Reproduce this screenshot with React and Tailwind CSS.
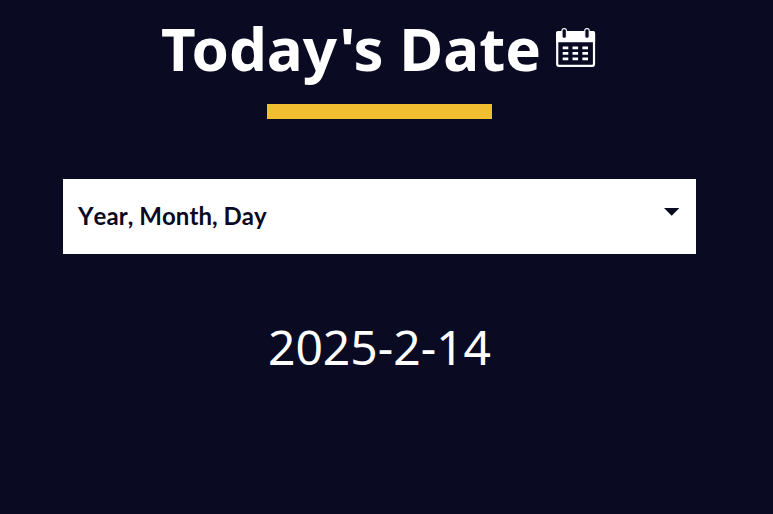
function CalendarIcon() {
  return (
    <svg viewBox="0 0 40 40" className="h-10 w-10 shrink-0" aria-hidden="true">
      <rect x="1.2" y="4.2" width="36.8" height="33.6" rx="1.8" fill="#0a0a23" stroke="#fff" strokeWidth="2.2" />
      <path d="M0 14.2V5.2Q0 3.1 2.1 3.1H37Q39.1 3.1 39.1 5.2V14.2Z" fill="#fff" />
      <rect x="6" y=".6" width="4.4" height="9.8" rx="2" fill="#0a0a23" stroke="#fff" strokeWidth="1.1" />
      <rect x="28.8" y=".6" width="4.4" height="9.8" rx="2" fill="#0a0a23" stroke="#fff" strokeWidth="1.1" />
      <path
        d="M6.7 18.4h5.6v2.8H6.7zM16.5 18.4h5.6v2.8h-5.6zM26.4 18.4H32v2.8h-5.6zM6.7 23.9h5.6v2.8H6.7zM16.5 23.9h5.6v2.8h-5.6zM26.4 23.9H32v2.8h-5.6zM6.7 29.4h5.6v2.8H6.7zM16.5 29.4h5.6v2.8h-5.6zM26.4 29.4H32v2.8h-5.6z"
        fill="#fff"
      />
    </svg>
  );
}

export default function App() {
  return (
    <main className="flex h-[514px] w-[773px] flex-col items-center overflow-hidden bg-[#0a0a23] pr-3.5 font-['Noto_Sans',sans-serif] text-white">
      <header className="flex items-start gap-[15px] pt-2 pr-0.5">
        <h1 className="text-[60px] leading-[80px] font-bold whitespace-nowrap">Today's Date</h1>
        <div className="pt-5">
          <CalendarIcon />
        </div>
      </header>
      <div className="mt-4 h-[15px] w-[225px] bg-[#f1be32]" />
      <button className="mt-[60px] flex h-[75px] w-[633px] items-center justify-between bg-white pr-4 pl-[15px] font-['Lato',sans-serif] text-2xl font-bold text-[#0a0a23] [font-kerning:none]">
        <span className="mb-0.5 tracking-[0.05px]">Year, Month, Day</span>
        <svg viewBox="0 0 16 8" className="mb-2.5 h-2 w-4" aria-hidden="true">
          <path d="M0 0h15.4L7.7 7.8z" fill="currentColor" />
        </svg>
      </button>
      <p className="mt-[60px] text-5xl leading-[66px]">2025-2-14</p>
    </main>
  );
}
